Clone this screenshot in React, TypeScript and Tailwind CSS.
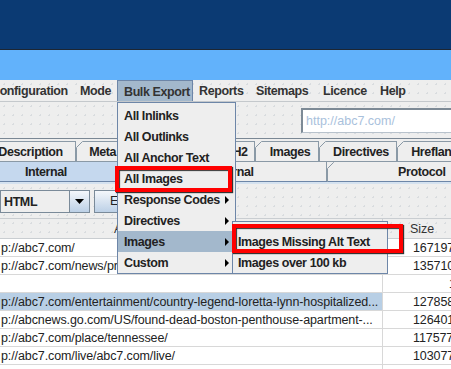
import React from "react";

const MENU_BAR = [
  { label: "Configuration", w: "w-[73px]", cls: "-ml-[9px] pl-0" },
  { label: "Mode", w: "w-[44px]", cls: "pl-[7px]" },
  { label: "Bulk Export", w: "w-[76px]", cls: "pl-[6px]", active: true },
  { label: "Reports", w: "w-[57px]", cls: "pl-[6px]" },
  { label: "Sitemaps", w: "w-[67px]", cls: "pl-[6px]" },
  { label: "Licence", w: "w-[57px]", cls: "pl-[6px]" },
  { label: "Help", w: "w-[40px]", cls: "pl-[6px]" },
];

const TABS = [
  { label: "Description", w: "w-[76px]", first: true },
  { label: "Meta Keywords", w: "w-[107px]" },
  { label: "H1", w: "w-[36px]" },
  { label: "H2", w: "w-[36px]" },
  { label: "Images", w: "w-[64px]" },
  { label: "Directives", w: "w-[78px]" },
  { label: "Hreflang", w: "w-[70px]" },
];

const ROWS = [
  { url: "p://abc7.com/", size: "1671970" },
  { url: "p://abc7.com/news/prince-harry-meghan-markle-wedding/", size: "1357100" },
  { url: "", size: "" },
  { url: "p://abc7.com/entertainment/country-legend-loretta-lynn-hospitalized...", size: "1278580", selected: true },
  { url: "p://abcnews.go.com/US/found-dead-boston-penthouse-apartment-...", size: "1264010" },
  { url: "p://abc7.com/place/tennessee/", size: "1175770" },
  { url: "p://abc7.com/live/abc7.com/live/", size: "1030770" },
  { url: "", size: "" },
];

const EXPORT_ITEMS = [
  { label: "All Inlinks" },
  { label: "All Outlinks" },
  { label: "All Anchor Text" },
  { label: "All Images" },
  { label: "Response Codes", sub: true },
  { label: "Directives", sub: true },
  { label: "Images", sub: true, active: true },
  { label: "Custom", sub: true },
];

const dots = "bg-[radial-gradient(#d9dcdf_1px,transparent_1px)] bg-[length:9px_9px]";
const bold = "text-[12.5px] font-bold tracking-[-0.4px] text-[#222]";

function Arrow() {
  return (
    <svg width="4" height="8" viewBox="0 0 4 8" className="shrink-0">
      <path d="M0 0 L4 4 L0 8 Z" fill="#000" />
    </svg>
  );
}

function Slant() {
  return (
    <svg width="7" height="20" viewBox="0 0 7 20" className="shrink-0">
      <path d="M0.5 20 L0.5 6.5 L6.5 0.5 L7 0.5" stroke="#8a99a6" fill="none" />
    </svg>
  );
}

export default function App() {
  return (
    <div className="relative w-[451px] h-[369px] overflow-hidden bg-[#eeeeee] font-['Liberation_Sans',Arial,sans-serif] text-black">
      {/* header bands */}
      <div className="h-[50px] bg-[#0b3a73] border-b border-[#1d2633]" />
      <div className="h-[30px] bg-[#62b2fb]" />

      {/* menu bar */}
      <div className={`h-[22px] flex items-stretch border-b border-[#c4c8cc] bg-[#eeeeee] ${dots}`}>
        {MENU_BAR.map((m) => (
          <div
            key={m.label}
            className={`${m.w} shrink-0 flex items-center pt-[2px] overflow-hidden ${bold} !text-[#333] ${
              m.active ? "bg-[#a3b8cc] border border-b-0 border-[#6d86a8]" : ""
            }`}
          >
            <span className={`${m.cls} whitespace-nowrap`}>{m.label}</span>
          </div>
        ))}
      </div>

      {/* toolbar */}
      <div className={`h-[37px] flex items-start justify-end border-b border-[#7a8794] ${dots}`}>
        <div className="mt-[6px] w-[150px] h-[25px] bg-white border-t-2 border-l-2 border-[#7d8a96] border-b border-b-[#b8c2cc] flex items-center pl-[3px] text-[12.5px] text-[#a9c1dc]">
          http://abc7.com/
        </div>
      </div>

      {/* tabs */}
      <div className="h-[22px] flex items-end overflow-hidden whitespace-nowrap">
        {TABS.map((t) => (
          <div key={t.label} className={`${t.w} shrink-0 h-[20px] flex`}>
            {!t.first && <Slant />}
            <div className={`flex-1 flex items-center justify-center pt-[2px] border-t border-r border-[#8a99a6] overflow-hidden ${bold}`}>
              <span className={t.first ? "-ml-[14px]" : ""}>{t.label}</span>
            </div>
          </div>
        ))}
      </div>

      {/* sub tabs */}
      <div className="h-[20px] flex border-t border-[#8a99a6] whitespace-nowrap">
        <div className={`w-[134px] shrink-0 bg-[#c5d8ee] flex items-center pt-[1px] pl-[25px] ${bold}`}>Internal</div>
        <div className="w-[193px] shrink-0 flex">
          <Slant />
          <div className={`flex-1 flex items-center justify-center pt-[1px] pr-[6px] border-r border-[#8a99a6] ${bold}`}>
            External
          </div>
        </div>
        <div className="flex-1 flex">
          <Slant />
          <div className={`flex-1 flex items-center pt-[1px] pl-[64px] ${bold}`}>Protocol</div>
        </div>
      </div>
      <div className="h-[1px] bg-[#6d86a8]" />
      <div className="h-[2px] bg-[#d5e2f0]" />

      {/* filter row */}
      <div className={`h-[35px] flex items-start pt-[6px] border-b border-[#c9cdd1] ${dots}`}>
        <div className={`w-[70px] h-[23px] border border-[#7a8a99] bg-[#eeeeee] flex items-center pl-[3px] pt-[1px] ${bold}`}>
          HTML
        </div>
        <div className="w-[20px] h-[23px] border border-l-0 border-[#7a8a99] bg-[linear-gradient(#f4f7fb,#bcd0e6)] flex items-center justify-center">
          <svg width="9" height="5" viewBox="0 0 9 5">
            <path d="M0 0 L9 0 L4.5 5 Z" fill="#000" />
          </svg>
        </div>
        <div className="ml-[4px] w-[80px] h-[23px] border border-[#7a8a99] bg-[linear-gradient(#f4f7fb,#bcd0e6)] flex items-center pl-[15px] text-[12.5px] text-[#222]">
          Export
        </div>
      </div>

      {/* table header */}
      <div className={`h-[20px] flex border-b border-[#c9cdd1] ${dots}`}>
        <div className="w-[383px] shrink-0 border-r border-[#c9cdd1] pl-[114px] text-[12.5px] leading-[20px] text-[#333] overflow-hidden whitespace-nowrap">
          Address
        </div>
        <div className="flex-1 pl-[27px] text-[12.5px] leading-[20px] text-[#333]">Size</div>
      </div>

      {/* rows */}
      {ROWS.map((r, i) => (
        <div
          key={i}
          className="h-[18px] flex bg-white border-b border-[#d8d8d8] text-[12.5px] tracking-[-0.1px] leading-[18px] whitespace-nowrap"
        >
          <div
            className={`w-[383px] shrink-0 border-r border-[#d8d8d8] overflow-hidden pl-[1px] text-[#222] ${
              r.selected ? "bg-[#b8cfe5]" : ""
            }`}
          >
            {r.url}
          </div>
          <div className="flex-1 overflow-hidden pl-[30px] text-[#222]">
            {i === 2 ? <span className="pl-[36px]">1</span> : r.size}
          </div>
        </div>
      ))}

      {/* Bulk Export dropdown */}
      <div className="absolute left-[117px] top-[102px] w-[119px] h-[172px] bg-[#eeeeee] border border-[#6d86a8] pt-[2px]">
        {EXPORT_ITEMS.map((it) => (
          <div
            key={it.label}
            className={`h-[21px] flex items-center justify-between pl-[6px] pr-[6px] pt-[1px] whitespace-nowrap ${bold} ${
              it.active ? "bg-[#a3b8cc]" : ""
            }`}
          >
            <span>{it.label}</span>
            {it.sub && <Arrow />}
          </div>
        ))}
      </div>

      {/* Images submenu */}
      <div className="absolute left-[232px] top-[221px] w-[156px] h-[53px] bg-[#eeeeee] border border-[#6d86a8] pt-[9px]">
        <div className={`h-[21px] flex items-center pl-[5px] pt-[1px] whitespace-nowrap ${bold}`}>
          Images Missing Alt Text
        </div>
        <div className={`h-[21px] flex items-center pl-[5px] pt-[1px] whitespace-nowrap ${bold}`}>
          Images over 100 kb
        </div>
      </div>

      {/* red highlight boxes */}
      <div className="absolute left-[115px] top-[166px] w-[117px] h-[26px] border-4 border-[#ff0000] shadow-[1px_1px_1px_#333,inset_1px_1px_1px_#333]" />
      <div className="absolute left-[232px] top-[224px] w-[171px] h-[29px] border-4 border-[#ff0000] shadow-[1px_1px_1px_#333,inset_1px_1px_1px_#333]" />
    </div>
  );
}
